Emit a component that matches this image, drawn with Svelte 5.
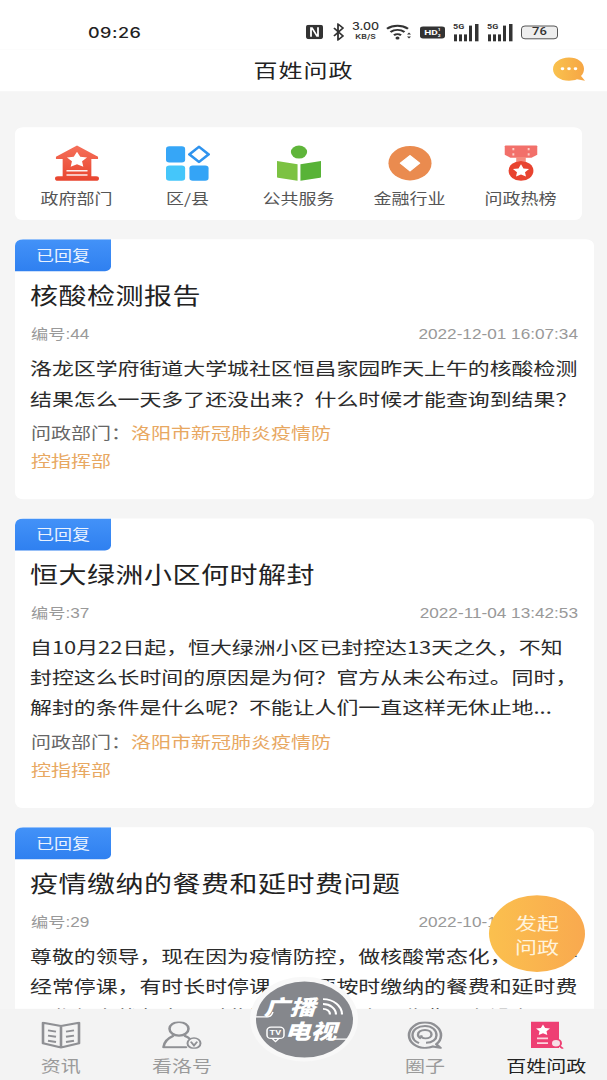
<script>
  const shortcuts = [
    { label: "政府部门", icon: "house" },
    { label: "区/县", icon: "grid" },
    { label: "公共服务", icon: "book" },
    { label: "金融行业", icon: "coin" },
    { label: "问政热榜", icon: "medal" },
  ];

  const dept = "洛阳市新冠肺炎疫情防控指挥部";

  const posts = [
    {
      title: "核酸检测报告",
      no: 44,
      time: "2022-12-01 16:07:34",
      body: ["洛龙区学府街道大学城社区恒昌家园昨天上午的核酸检测", "结果怎么一天多了还没出来？什么时候才能查询到结果？"],
    },
    {
      title: "恒大绿洲小区何时解封",
      no: 37,
      time: "2022-11-04 13:42:53",
      body: ["自10月22日起，恒大绿洲小区已封控达13天之久，不知", "封控这么长时间的原因是为何？官方从未公布过。同时，", "解封的条件是什么呢？不能让人们一直这样无休止地..."],
    },
    {
      title: "疫情缴纳的餐费和延时费问题",
      no: 29,
      time: "2022-10-18 09:12:40",
      body: ["尊敬的领导，现在因为疫情防控，做核酸常态化，学生一", "经常停课，有时长时停课，但要按时缴纳的餐费和延时费", "工作组在找督办，对此问题希望能合理收费，有没有..."],
    },
  ];
</script>

<div class="viewport">
  <!-- the capture is squashed vertically, so the whole page is laid out tall and scaled -->
  <div class="page">
    <header class="status">
      <span class="clock">09:26</span>
      <div class="status-icons">
        <svg class="s-nfc" viewBox="0 0 17 18">
          <rect width="17" height="18" rx="3" fill="#333" />
          <path d="M5 15V4h1l5 10h1V3" fill="none" stroke="#fff" stroke-width="1.800" />
        </svg>
        <svg class="s-bt" viewBox="0 0 13 22">
          <path d="M2 6l9 10-5 5V1l5 5-9 10" fill="none" stroke="#333" stroke-width="1.800" />
        </svg>
        <div class="s-speed"><b>3.00</b><small>KB/S</small></div>
        <svg class="s-wifi" viewBox="0 0 26 20">
          <path d="M1 6c6-5 15-5 21 0M4.500 10c4-3.500 10-3.500 14 0M8 14c2-1.800 5-1.800 7 0" fill="none" stroke="#333" stroke-width="2.400" />
          <circle cx="11.500" cy="17.500" r="2" fill="#333" />
          <path d="M21 13h4l-2-2.500zM21 15.500h4l-2 2.500z" fill="#333" />
        </svg>
        <div class="s-hd">HD<i>1<br />2</i></div>
        {#each [1, 2] as sim}
          <div class="s-sig" data-sim={sim}>
            <span class="five">5G</span>
            <svg viewBox="0 0 26 24">
              <rect x="1" y="15" width="3" height="9" fill="#333" />
              <rect x="6" y="15" width="3" height="9" fill="#333" />
              <rect x="11" y="15" width="3" height="9" fill="#333" />
              <rect x="16" y="4" width="3" height="20" fill="#333" />
              <rect x="22" y="2" width="3.500" height="22" fill="#333" />
            </svg>
          </div>
        {/each}
        <div class="s-bat"><span>76</span></div>
      </div>
    </header>

    <nav class="topbar">
      <h1>百姓问政</h1>
      <svg class="chat" viewBox="0 0 32 32">
        <defs>
          <linearGradient id="chatg" x1="0" x2="1">
            <stop offset="0" stop-color="#f9c24e" />
            <stop offset="1" stop-color="#f6a544" />
          </linearGradient>
        </defs>
        <path d="M16 1c8.500 0 15 6 15 14 0 3.500-1 6.500-3 9l4 6-8-1.800c-2.500 1.200-5 1.800-8 1.800C7 30 0 23.500 0 15.500S7 1 16 1z" fill="url(#chatg)" />
        <circle cx="9.500" cy="15" r="1.800" fill="#fff" />
        <circle cx="16" cy="15" r="1.800" fill="#fff" />
        <circle cx="22.500" cy="15" r="1.800" fill="#fff" />
      </svg>
    </nav>

    <main class="content">
      <section class="shortcuts">
        {#each shortcuts as s}
          <div class="shortcut">
            <svg viewBox="0 0 46 46" class="sc-icon">
              {#if s.icon === "house"}
                <defs>
                  <linearGradient id="houseg" x1="0" x2="0" y1="0" y2="1">
                    <stop offset="0" stop-color="#f5705a" />
                    <stop offset="1" stop-color="#e8442e" />
                  </linearGradient>
                </defs>
                <path d="M23 0l22 14.500v3H38V40h5a3 3 0 0 1 0 6H3a3 3 0 0 1 0-6h5V17.500H1v-3z" fill="url(#houseg)" />
                <path d="M23 8l3.400 6.600 7.100 1-5.200 5 1.300 7.200-6.600-3.400-6.600 3.400 1.300-7.200-5.200-5 7.100-1z" fill="#fff" />
                <path d="M12 33h22M12 38.500h22" stroke="#fff" stroke-width="2" opacity=".9" />
              {:else if s.icon === "grid"}
                <rect x="0" y="1" width="20" height="21" rx="3.500" fill="#36a6f7" />
                <rect x="0" y="26" width="20" height="20" rx="3.500" fill="#45c6fa" />
                <rect x="24.500" y="26" width="20" height="20" rx="3.500" fill="#34a4f6" />
                <path d="M34.500 1.500L44.500 11.500l-10 10-10-10z" fill="none" stroke="#2f93ee" stroke-width="3" stroke-linejoin="round" />
              {:else if s.icon === "book"}
                <circle cx="23" cy="8.500" r="8.500" fill="#5fb53a" />
                <path d="M0 20l21.500 4.500V46L1 42a1 1 0 0 1-1-1z" fill="#7cc242" />
                <path d="M46 20l-21.500 4.500V46L45 42a1 1 0 0 0 1-1z" fill="#58b337" />
              {:else if s.icon === "coin"}
                <circle cx="23" cy="23" r="22.500" fill="#ea8b4f" />
                <path d="M23 13l10 10-10 10-10-10z" fill="#fff" stroke="#fff" stroke-width="1.500" stroke-linejoin="round" />
              {:else if s.icon === "medal"}
                <path d="M6 1a1 1 0 0 1 1-1h32a1 1 0 0 1 1 1h0v11l-6 4H12l-6-4z" fill="#f2706a" />
                <path d="M15 3v3M15 10v3M31 3v3M31 10v3" stroke="#fbd0c8" stroke-width="2" />
                <path d="M18 15h10v6H18z" fill="#f58b7e" />
                <circle cx="23" cy="33" r="13" fill="#e8432f" />
                <path d="M23 24.500l2.600 5.300 5.800.8-4.200 4.100 1 5.800-5.200-2.700-5.200 2.700 1-5.800-4.200-4.100 5.800-.8z" fill="#fff" />
              {/if}
            </svg>
            <span>{s.label}</span>
          </div>
        {/each}
      </section>

      {#each posts as p}
        <article class="card">
          <div class="tag">已回复</div>
          <h2>{p.title}</h2>
          <div class="meta">
            <span>编号:{p.no}</span>
            <span>{p.time}</span>
          </div>
          <p class="body">
            {#each p.body as line}
              <span>{line}</span>
            {/each}
          </p>
          <p class="dept"><span class="dept-label">问政部门：</span>{dept}</p>
        </article>
      {/each}
    </main>

    <button class="fab">发起<br />问政</button>

    <footer class="tabs">
      <div class="tab">
        <svg viewBox="0 0 40 34" class="tab-icon">
          <path d="M2 1.500L20 5.500 38 1.500V27L20 32.500 2 27zM20 5.500v27" fill="none" stroke="#8f9094" stroke-width="2.600" stroke-linejoin="round" />
          <path d="M7 11l8 1.500M7 17.500l8 1.500M7 24l8 1.500M25 12.500l8-1.500M25 19l8-1.500M25 25.500l8-1.500" stroke="#8f9094" stroke-width="2.400" />
        </svg>
        <span>资讯</span>
      </div>
      <div class="tab">
        <svg viewBox="0 0 40 34" class="tab-icon">
          <ellipse cx="17" cy="9" rx="9.500" ry="8.500" fill="none" stroke="#8f9094" stroke-width="2.600" />
          <path d="M1.500 32c.5-6 4-11 9.500-14M23 18c1.800.9 3.300 2 4.500 3.300M1.500 32H24" fill="none" stroke="#8f9094" stroke-width="2.600" stroke-linecap="round" />
          <circle cx="32" cy="27" r="6.500" fill="none" stroke="#8f9094" stroke-width="2" />
          <path d="M28.800 25l3.200 4.800 3.200-4.800" fill="none" stroke="#8f9094" stroke-width="2" />
        </svg>
        <span>看洛号</span>
      </div>
      <div class="tab tab-spacer"></div>
      <div class="tab">
        <svg viewBox="0 0 36 34" class="tab-icon">
          <path d="M26 31c-2.400 1.300-5.100 2-8 2C9.200 33 2 25.800 2 17S9.200 1 18 1s16 7.200 16 16c0 4.400-1.800 8.400-4.700 11.300l4.200 4.700z" fill="none" stroke="#8f9094" stroke-width="2.600" stroke-linejoin="round" />
          <path d="M12 27c-4-2-6.500-5.500-6.500-10 0-6.900 5.600-11.500 12.500-11.500S29.500 10.500 29.500 17c0 5-4 9.500-10.500 9.500" fill="none" stroke="#8f9094" stroke-width="2.400" />
          <path d="M14 21c-2-1-3-2.600-3-4.500 0-3.500 3-6 7-6s6.500 2.600 6.500 5.500-2.500 5-6 5-4.500-2-4-4" fill="none" stroke="#8f9094" stroke-width="2.400" />
        </svg>
        <span>圈子</span>
      </div>
      <div class="tab active">
        <svg viewBox="0 0 36 34" class="tab-icon">
          <path d="M3 0h28v33H3z" fill="#ee3f73" />
          <path d="M15 3.500l2.200 4.400 4.800.7-3.500 3.400.8 4.800-4.300-2.300-4.300 2.300.8-4.800L8 8.600l4.800-.7z" fill="#fff" />
          <path d="M9 21h11M9 27h11" stroke="#fbd4de" stroke-width="2.200" />
          <circle cx="28" cy="27" r="5" fill="#f6dfe6" stroke="#ee3f73" stroke-width="2" />
          <path d="M31.500 30.500l3.500 3.500" stroke="#ee3f73" stroke-width="2.200" />
        </svg>
        <span>百姓问政</span>
      </div>
    </footer>

    <div class="live">
      <div class="live-inner">
        <svg class="live-lines" viewBox="0 0 97 95">
          <path d="M0 44h12c3 0 4-3 5-6" fill="none" stroke="#fff" stroke-width="1.500" />
          <path d="M70 72h21" stroke="#fff" stroke-width="1.500" />
          <path d="M68 34a7 7 0 0 1 7 7M68 28a13 13 0 0 1 13 13M68 22a19 19 0 0 1 19 19" fill="none" stroke="#fff" stroke-width="2.200" transform="translate(-1 0)" />
          <rect x="11" y="57" width="17" height="14" rx="4" fill="none" stroke="#fff" stroke-width="1.500" />
          <path d="M16 71l3.500 4 3.500-4" fill="none" stroke="#fff" stroke-width="1.500" />
        </svg>
        <span class="live-tv">TV</span>
        <span class="live-top">广播</span>
        <span class="live-bottom">电视</span>
      </div>
    </div>
  </div>
</div>

<style>
  :global(body) {
    margin: 0;
    background: #f5f5f5;
  }

  .viewport {
    height: 100vh;
    overflow: hidden;
  }

  .page {
    position: relative;
    width: 607px;
    height: 1350px;
    overflow: hidden;
    transform: scaleY(0.8);
    transform-origin: 0 0;
    background: #f5f5f5;
    font-family: "Noto Sans CJK SC", "Noto Sans", sans-serif;
    color: #222;
  }

  .status {
    height: 62px;
    background: #fff;
    display: flex;
    align-items: flex-end;
    padding: 0 49px 3px 88px;
    box-sizing: border-box;
  }

  .clock {
    font-family: Inter, Roboto, sans-serif;
    font-size: 18px;
    font-weight: 500;
    color: #222;
    letter-spacing: 0.5px;
    line-height: 24px;
    margin-bottom: 5px;
  }

  .status-icons {
    margin-left: auto;
    display: flex;
    align-items: center;
    gap: 8px;
    height: 28px;
    margin-bottom: 5px;
  }

  .s-nfc { width: 17px; height: 18px; margin-right: 1px; }
  .s-bt { width: 13px; height: 22px; }
  .s-wifi { width: 26px; height: 20px; }

  .s-speed {
    width: 25px;
    display: flex;
    flex-direction: column;
    align-items: center;
    font-family: Inter, Roboto, sans-serif;
    color: #333;
    line-height: 13px;
  }
  .s-speed b { font-size: 12.500px; font-weight: 500; white-space: nowrap; }
  .s-speed small { font-size: 8.500px; font-weight: 600; white-space: nowrap; }

  .s-hd {
    width: 25px;
    height: 15px;
    box-sizing: border-box;
    border-radius: 3px;
    background: #333;
    color: #fff;
    font: 700 10px/15px Roboto, sans-serif;
    text-align: center;
    display: flex;
    justify-content: center;
  }
  .s-hd i { font-size: 5px; line-height: 7px; font-style: normal; padding-top: 1px; }

  .s-sig {
    position: relative;
    width: 26px;
    height: 24px;
  }
  .s-sig svg { position: absolute; left: 0; bottom: 0; width: 26px; height: 24px; }
  .five {
    position: absolute;
    left: 0;
    top: -1px;
    font: 700 9px/12px Roboto, sans-serif;
    color: #333;
    z-index: 1;
  }

  .s-bat {
    width: 37px;
    height: 17px;
    box-sizing: border-box;
    border: 1.500px solid #444;
    border-radius: 4px;
    background: #eee;
    text-align: center;
    font: 500 13px/14px Roboto, sans-serif;
    color: #333;
  }

  .topbar {
    position: relative;
    height: 52px;
    background: #fff;
    display: flex;
    align-items: center;
    justify-content: center;
  }
  .topbar h1 {
    margin: 0;
    font-size: 24px;
    font-weight: 400;
    letter-spacing: 1px;
    line-height: 40px;
    margin-bottom: 2px;
    color: #222;
  }
  .chat {
    position: absolute;
    left: 553px;
    top: 8px;
    width: 32px;
    height: 34px;
  }

  .content {
    padding: 45px 13px 0 15px;
    display: flex;
    flex-direction: column;
    gap: 24px;
  }

  .shortcuts {
    margin-right: 12px;
    height: 116px;
    box-sizing: border-box;
    padding: 22px 6px 0;
    background: #fff;
    border-radius: 8px;
    display: grid;
    grid-template-columns: repeat(5, 1fr);
  }
  .shortcut {
    display: flex;
    flex-direction: column;
    align-items: center;
    color: #555;
    font-size: 18px;
    line-height: 30px;
  }
  .sc-icon { width: 44px; height: 46px; margin-bottom: 4.500px; }

  .card {
    background: #fff;
    border-radius: 8px;
    padding: 0 16px 30.500px;
    overflow: hidden;
  }

  .tag {
    margin-left: -16px;
    width: 96px;
    height: 40px;
    background: linear-gradient(180deg, #4392f8, #2f80f0);
    border-radius: 0 0 6px 0;
    color: #e9f2ff;
    font-size: 18px;
    line-height: 38px;
    text-align: center;
  }

  h2 {
    margin: 4px 0 0 -1px;
    font-size: 28px;
    font-weight: 400;
    line-height: 50px;
    letter-spacing: 0.5px;
    color: #222;
  }

  .meta {
    margin-top: 10px;
    display: flex;
    justify-content: space-between;
    font-family: "Liberation Sans", "Noto Sans CJK SC", sans-serif;
    font-size: 17.200px;
    line-height: 30px;
    color: #999;
  }

  .body {
    margin: 8px 0 0 -1px;
    font-size: 21.900px;
    line-height: 37.500px;
    color: #2b2b2b;
  }
  .body span { display: block; white-space: nowrap; }

  .dept {
    margin: 7px 0 0;
    max-width: 305px;
    font-size: 20px;
    line-height: 35px;
    color: #e8a862;
  }
  .dept-label { color: #666; }

  .fab {
    position: absolute;
    left: 489px;
    top: 1119px;
    width: 96px;
    height: 96px;
    padding: 0;
    border: 0;
    border-radius: 50%;
    background: linear-gradient(90deg, #fbc04e, #f9a94f);
    color: #fff3dc;
    font: 400 22px/30px "Noto Sans CJK SC", sans-serif;
  }

  .tabs {
    position: absolute;
    left: 0;
    right: 0;
    bottom: 0;
    height: 89px;
    background: #f3f3f3;
    display: grid;
    grid-template-columns: repeat(5, 1fr);
  }
  .tab {
    display: flex;
    flex-direction: column;
    align-items: center;
    padding-top: 16px;
    color: #9a9a9a;
    font-size: 20px;
    line-height: 30px;
  }
  .tab-icon { width: 40px; height: 34px; margin-bottom: 6px; }
  .active { color: #222; }

  .live {
    position: absolute;
    left: 250px;
    top: 1221px;
    width: 108px;
    height: 106px;
    border-radius: 50%;
    background: #f8f8f8;
    display: flex;
    align-items: center;
    justify-content: center;
  }
  .live-inner {
    position: relative;
    width: 97px;
    height: 95px;
    border-radius: 50%;
    background: #85878c;
    color: #fff;
    font-weight: 900;
    font-style: italic;
    font-size: 26px;
    line-height: 30px;
  }
  .live-lines { position: absolute; inset: 0; width: 100%; height: 100%; }
  .live-tv {
    position: absolute;
    left: 14px;
    top: 58px;
    font: 700 9px/12px Roboto, sans-serif;
  }
  .live-top { position: absolute; left: 8px; top: 16px; }
  .live-bottom { position: absolute; left: 29px; top: 46px; }
</style>
